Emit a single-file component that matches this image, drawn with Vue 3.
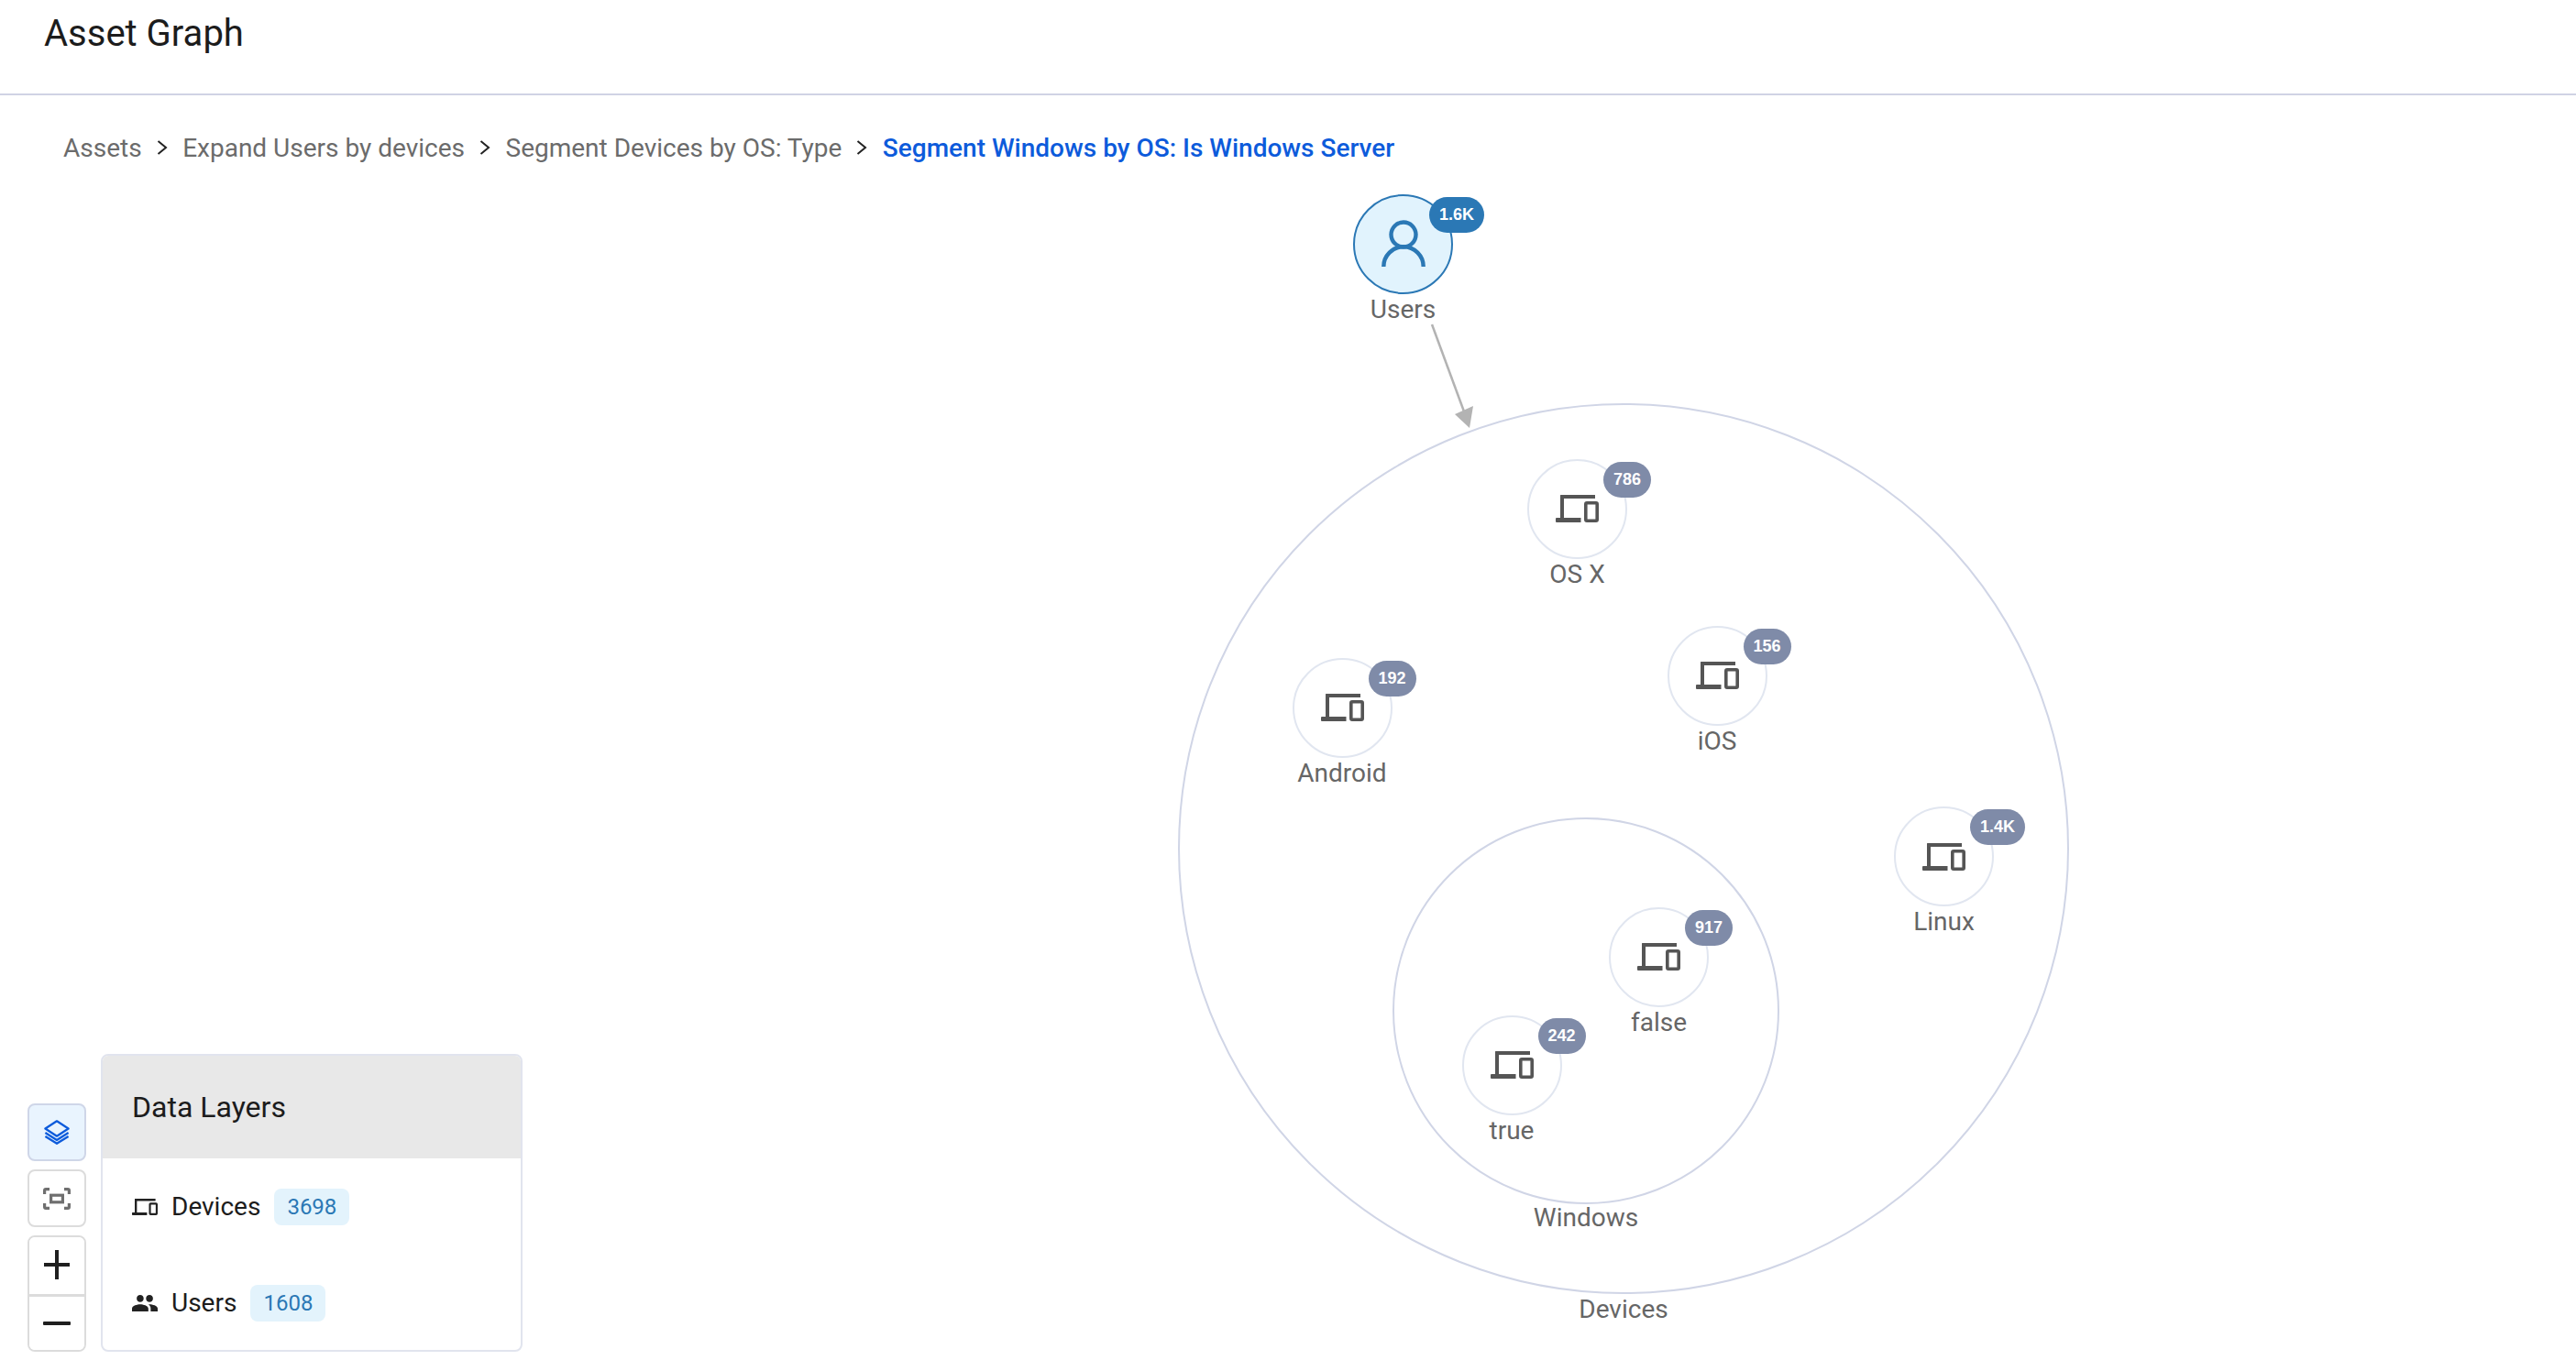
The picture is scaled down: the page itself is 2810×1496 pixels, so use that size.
<script setup>
const crumbs = ['Assets', 'Expand Users by devices', 'Segment Devices by OS: Type']
const groups = [
  { label: 'Devices', cx: 1771, cy: 926, r: 486, labelY: 1429 },
  { label: 'Windows', cx: 1730, cy: 1103, r: 211, labelY: 1329 },
]
const nodes = [
  { label: 'OS X', x: 1720.5, y: 555, count: '786' },
  { label: 'Android', x: 1464, y: 772, count: '192' },
  { label: 'iOS', x: 1873, y: 737, count: '156' },
  { label: 'Linux', x: 2120.5, y: 934.5, count: '1.4K' },
  { label: 'false', x: 1809.5, y: 1044, count: '917' },
  { label: 'true', x: 1649, y: 1162, count: '242' },
]
const groupStyle = (g) => ({
  left: g.cx - g.r + 'px',
  top: g.cy - g.r + 'px',
  width: g.r * 2 + 'px',
  height: g.r * 2 + 'px',
})
const pos = (x, y) => ({ left: x + 'px', top: y + 'px' })
</script>

<template>
  <div class="page">
    <header class="topbar">
      <h1 class="title">Asset Graph</h1>
    </header>
    <nav class="crumbs">
      <template v-for="c in crumbs" :key="c">
        <span class="crumb">{{ c }}</span>
        <svg class="chev" viewBox="0 0 12.5 16" width="12.5" height="16"><path d="M1.5 1 L10 8 L1.5 15" fill="none" stroke="#222" stroke-width="2" /></svg>
      </template>
      <span class="crumb current">Segment Windows by OS: Is Windows Server</span>
    </nav>

    <div class="canvas">
      <div v-for="g in groups" :key="g.label" class="group" :style="groupStyle(g)"></div>
      <span v-for="g in groups" :key="g.label + 'l'" class="label" :style="pos(g.cx, g.labelY)">{{ g.label }}</span>

      <svg class="edge" width="2810" height="1496">
        <line x1="1562" y1="354" x2="1597" y2="449" stroke="#b3b3b3" stroke-width="2.5" />
        <polygon points="1587,452 1607,443 1603,467" fill="#b3b3b3" />
      </svg>

      <div class="node user" :style="pos(1530.5, 266.5)">
        <svg viewBox="-30 -30 60 60" width="60" height="60" fill="none" stroke="#2b78b5" stroke-width="4.4">
          <circle cx="0" cy="-11" r="13.5" />
          <path d="M-21.7 24 A21.7 21.7 0 0 1 21.7 24" />
        </svg>
        <span class="badge primary">1.6K</span>
        <span class="node-label">Users</span>
      </div>

      <div v-for="n in nodes" :key="n.label" class="node" :style="pos(n.x, n.y)">
        <svg viewBox="0 0 47 30" width="47" height="30">
          <path fill="#555" d="M5 0.5 Q5 0 5.5 0 H43 V4 H9 V25 H27.5 V30 H1 Q0 30 0 29 V26 Q0 25 1 25 H5 Z" />
          <rect x="32.8" y="8.8" width="12.4" height="19.4" rx="1.2" fill="none" stroke="#555" stroke-width="3.6" />
        </svg>
        <span class="badge">{{ n.count }}</span>
        <span class="node-label">{{ n.label }}</span>
      </div>
    </div>

    <div class="controls">
      <div class="tools">
        <button class="tool active">
          <svg viewBox="0 0 28 27" width="28" height="27" fill="none" stroke="#0d5bdb" stroke-width="2.3" stroke-linejoin="round">
            <polygon points="14,1.3 26.6,9.5 14,17.7 1.4,9.5" />
            <path d="M1.4 14 L14 22 L26.6 14" />
            <path d="M1.4 18 L14 25.8 L26.6 18" />
          </svg>
        </button>
        <button class="tool">
          <svg viewBox="0 0 30 24" width="30" height="24" fill="none" stroke="#6f6f6f" stroke-width="3.2">
            <path d="M1.6 7 V3 Q1.6 1.6 3 1.6 H7 M23 1.6 H27 Q28.4 1.6 28.4 3 V7 M28.4 17 V21 Q28.4 22.4 27 22.4 H23 M7 22.4 H3 Q1.6 22.4 1.6 21 V17" />
            <rect x="8.6" y="8.2" width="12.8" height="7.6" />
          </svg>
        </button>
        <div class="zoom">
          <button class="zoom-btn plus">
            <svg viewBox="0 0 28 32" width="28" height="32"><path d="M14 0 V32 M0 16 H28" stroke="#1f1f1f" stroke-width="4" fill="none" /></svg>
          </button>
          <button class="zoom-btn minus">
            <svg viewBox="0 0 30 4" width="30" height="4"><rect width="30" height="4" rx="1" fill="#1f1f1f" /></svg>
          </button>
        </div>
      </div>
      <section class="panel">
        <div class="panel-head">Data Layers</div>
        <div class="row">
          <svg viewBox="0 0 47 30" width="28" height="18">
            <path fill="#222" d="M5 0.5 Q5 0 5.5 0 H43 V4 H9 V25 H27.5 V30 H1 Q0 30 0 29 V26 Q0 25 1 25 H5 Z" />
            <rect x="32.8" y="8.8" width="12.4" height="19.4" rx="1.2" fill="none" stroke="#222" stroke-width="3.6" />
          </svg>
          <span class="row-name">Devices</span>
          <span class="chip">3698</span>
        </div>
        <div class="row">
          <svg viewBox="1 5 22 14" width="28" height="18">
            <path fill="#222" d="M16 11c1.66 0 2.99-1.34 2.99-3S17.66 5 16 5c-1.66 0-3 1.34-3 3s1.34 3 3 3zm-8 0c1.66 0 2.99-1.34 2.99-3S9.66 5 8 5C6.34 5 5 6.34 5 8s1.34 3 3 3zm0 2c-2.33 0-7 1.17-7 3.5V19h14v-2.5c0-2.33-4.67-3.5-7-3.5zm8 0c-.29 0-.62.02-.97.05 1.16.84 1.97 1.97 1.97 3.45V19h6v-2.5c0-2.33-4.67-3.5-7-3.5z" />
          </svg>
          <span class="row-name">Users</span>
          <span class="chip">1608</span>
        </div>
      </section>
    </div>
  </div>
</template>

<style>
html, body { margin: 0; background: #fff; }
</style>

<style scoped>
.page {
  position: relative;
  width: 2810px;
  height: 1496px;
  overflow: hidden;
  background: #fff;
  font-family: Roboto, "Liberation Sans", sans-serif;
}
.topbar {
  height: 102px;
  border-bottom: 2px solid #d0d3e4;
  padding-left: 48px;
  box-sizing: content-box;
}
.title {
  margin: 0;
  padding-top: 12px;
  font-size: 40px;
  line-height: 50px;
  font-weight: 400;
  color: #1c1c1c;
}
.crumbs {
  display: flex;
  align-items: center;
  gap: 16px;
  padding: 37px 0 0 69px;
  height: 40px;
  font-size: 28px;
  color: #6b6b6b;
}
.crumb { white-space: nowrap; }
.crumb.current { color: #0d5bdb; font-weight: 500; }
.canvas { position: absolute; inset: 0; pointer-events: none; }
.group {
  position: absolute;
  box-sizing: border-box;
  border: 2px solid #d0d5e6;
  border-radius: 50%;
}
.label {
  position: absolute;
  transform: translate(-50%, -50%);
  font-size: 28px;
  line-height: 36px;
  color: #666;
  white-space: nowrap;
}
.edge { position: absolute; left: 0; top: 0; }
.node {
  position: absolute;
  width: 109px;
  height: 109px;
  margin: -54.5px 0 0 -54.5px;
  box-sizing: border-box;
  border: 2px solid #e1e6f0;
  border-radius: 50%;
  background: #fff;
  display: flex;
  align-items: center;
  justify-content: center;
}
.node.user { background: #e1f3fd; border-color: #2b78b5; }
.badge {
  position: absolute;
  left: 81px;
  top: 1px;
  height: 39px;
  min-width: 52px;
  padding: 0 11px;
  box-sizing: border-box;
  border-radius: 20px;
  background: #7f8ba8;
  color: #fff;
  font-family: "Liberation Sans", Arial, sans-serif;
  font-weight: 700;
  font-size: 18px;
  line-height: 39px;
  text-align: center;
}
.badge.primary { background: #2b78b5; }
.node-label {
  position: absolute;
  left: 50%;
  top: 106px;
  transform: translateX(-50%);
  font-size: 28px;
  line-height: 36px;
  color: #666;
  white-space: nowrap;
}
.controls {
  position: absolute;
  left: 30px;
  bottom: 21px;
  display: flex;
  align-items: flex-end;
  gap: 16px;
}
.tools { display: flex; flex-direction: column; gap: 9px; width: 64px; }
.tool, .zoom-btn {
  display: flex;
  align-items: center;
  justify-content: center;
  padding: 0;
  background: #fff;
}
.tool {
  height: 63px;
  box-sizing: border-box;
  border: 2px solid #dcdcdc;
  border-radius: 8px;
}
.tool.active { background: #e9f4fe; border-color: #cfd6e8; }
.zoom {
  box-sizing: border-box;
  height: 127px;
  border: 2px solid #dcdcdc;
  border-radius: 8px;
  display: flex;
  flex-direction: column;
  overflow: hidden;
}
.zoom-btn { border: 0; }
.zoom-btn.plus { height: 62px; padding-bottom: 2px; box-sizing: border-box; }
.zoom-btn.minus { flex: 1; border-top: 3px solid #dcdcdc; }
.panel {
  box-sizing: border-box;
  width: 460px;
  height: 325px;
  border: 2px solid #e1e4ee;
  border-radius: 8px;
  overflow: hidden;
  background: #fff;
}
.panel-head {
  height: 112px;
  padding-left: 32px;
  background: #e8e8e8;
  display: flex;
  align-items: center;
  font-size: 32px;
  color: #1c1c1c;
}
.row {
  height: 105px;
  display: flex;
  align-items: center;
  padding-left: 32px;
  font-size: 28px;
  color: #1c1c1c;
}
.row-name { margin-left: 15px; }
.chip {
  margin-left: 15px;
  width: 82px;
  height: 40px;
  line-height: 40px;
  text-align: center;
  border-radius: 8px;
  background: #e3f3fc;
  color: #2b78b5;
  font-size: 24px;
}
</style>
